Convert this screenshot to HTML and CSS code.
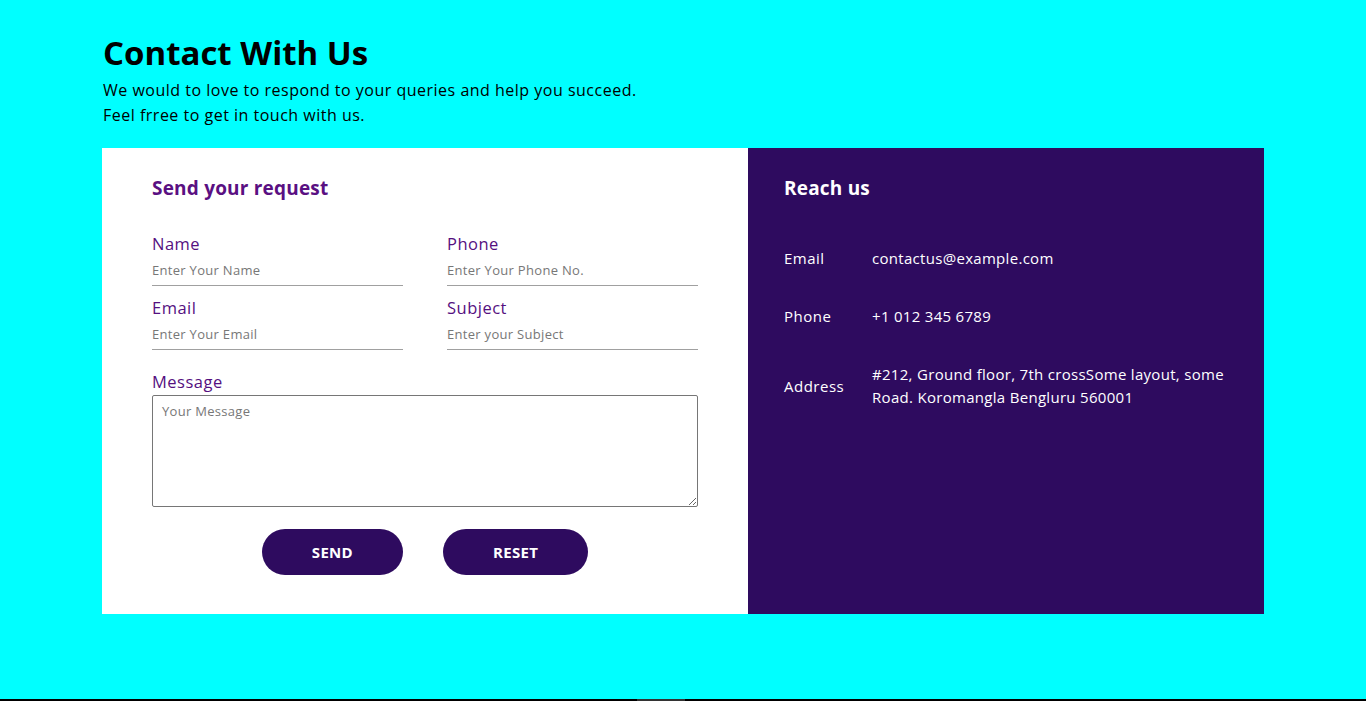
FILE: index.html
```html
<!DOCTYPE html>
<html lang="en">
<head>
<meta charset="utf-8">
<title>Contact With Us</title>
<link rel="stylesheet" href="styles.css">
</head>
<body>
<main class="page">
  <div class="container">
    <header class="intro">
      <h1 class="title">Contact With Us</h1>
      <p class="lead">We would to love to respond to your queries and help you succeed.<br>Feel frree to get in touch with us.</p>
    </header>
    <section class="card">
      <form class="form-side">
        <h2 class="form-title">Send your request</h2>
        <div class="fields">
          <div class="field">
            <label class="label" for="name">Name</label>
            <input class="input" id="name" type="text" placeholder="Enter Your Name">
          </div>
          <div class="field">
            <label class="label" for="phone">Phone</label>
            <input class="input" id="phone" type="text" placeholder="Enter Your Phone No.">
          </div>
          <div class="field">
            <label class="label" for="email">Email</label>
            <input class="input" id="email" type="text" placeholder="Enter Your Email">
          </div>
          <div class="field">
            <label class="label" for="subject">Subject</label>
            <input class="input" id="subject" type="text" placeholder="Enter your Subject">
          </div>
        </div>
        <div class="message">
          <label class="label" for="msg">Message</label>
          <textarea class="textarea" id="msg" placeholder="Your Message"></textarea>
        </div>
        <div class="actions">
          <button class="btn" type="button">SEND</button>
          <button class="btn" type="reset">RESET</button>
        </div>
      </form>
      <aside class="info-side">
        <h2 class="info-title">Reach us</h2>
        <dl class="info-list">
          <dt class="info-key">Email</dt>
          <dd class="info-val">contactus@example.com</dd>
          <dt class="info-key">Phone</dt>
          <dd class="info-val">+1 012 345 6789</dd>
          <dt class="info-key">Address</dt>
          <dd class="info-val">#212, Ground floor, 7th crossSome layout, some Road. Koromangla Bengluru 560001</dd>
        </dl>
      </aside>
    </section>
  </div>
</main>
<footer class="footer"><span class="footer-mark"></span></footer>
</body>
</html>
```

FILE: styles.css
```css
* { box-sizing: border-box; }

html, body {
  margin: 0;
  padding: 0;
}

body {
  font-family: "Open Sans", "DejaVu Sans", sans-serif;
  background: #000;
  color: #000;
}

.page {
  background: #00ffff;
  height: 699px;
  overflow: hidden;
}

.container {
  width: 1162px;
  margin: 0 auto;
  padding-top: 33px;
}

.title {
  margin: 0 0 0 1px;
  font-size: 33px;
  font-weight: 700;
  line-height: 40px;
}

.lead {
  margin: 5px 0 0 1px;
  font-size: 16px;
  line-height: 25px;
  letter-spacing: 0.5px;
}

.card {
  margin-top: 20px;
  display: grid;
  grid-template-columns: 646px 516px;
}

.form-side {
  background: #fff;
  padding: 27px 50px 39px;
}

.form-title,
.info-title {
  margin: 0;
  font-size: 19px;
  font-weight: 700;
  line-height: 27px;
  letter-spacing: 0.2px;
}

.form-title { color: #5a1082; }

.fields {
  margin-top: 30px;
  display: grid;
  grid-template-columns: 251px 251px;
  justify-content: space-between;
  row-gap: 10px;
}

.field {
  display: flex;
  flex-direction: column;
}

.label {
  color: #55107f;
  font-size: 16.5px;
  line-height: 24px;
  letter-spacing: 0.5px;
}

.input {
  border: 0;
  border-bottom: 1px solid #a0a0a0;
  padding: 4px 0 5px;
  font-family: inherit;
  font-size: 13px;
  line-height: 20px;
  letter-spacing: 0.3px;
  outline: none;
  background: transparent;
}

.input::placeholder,
.textarea::placeholder {
  color: #777;
}

.message {
  margin-top: 20px;
  display: flex;
  flex-direction: column;
}

.textarea {
  margin-top: 1px;
  height: 112px;
  border: 1px solid #767676;
  border-radius: 2px;
  padding: 6px 9px;
  font-family: inherit;
  font-size: 13px;
  line-height: 18px;
  letter-spacing: 0.3px;
  resize: vertical;
}

.actions {
  margin-top: 22px;
  display: flex;
  justify-content: center;
  gap: 40px;
}

.btn {
  height: 46px;
  padding: 0 50px;
  border: 0;
  border-radius: 23px;
  background: #2e0b5f;
  color: #fff;
  font-family: inherit;
  font-size: 15px;
  font-weight: 700;
  letter-spacing: 0.3px;
  cursor: pointer;
}

.info-side {
  background: #2e0b5f;
  color: #fff;
  padding: 27px 36px;
}

.info-list {
  margin: 45px 0 0;
  display: grid;
  grid-template-columns: 88px 1fr;
  row-gap: 35px;
  align-items: center;
}

.info-key {
  font-size: 15px;
  line-height: 23px;
  letter-spacing: 0.5px;
}

.info-val {
  margin: 0;
  font-size: 15px;
  line-height: 23px;
  letter-spacing: 0.3px;
}

.footer {
  height: 2px;
  background: #000;
}

.footer-mark {
  display: block;
  width: 48px;
  height: 2px;
  margin-left: 637px;
  background: #333;
}
```
